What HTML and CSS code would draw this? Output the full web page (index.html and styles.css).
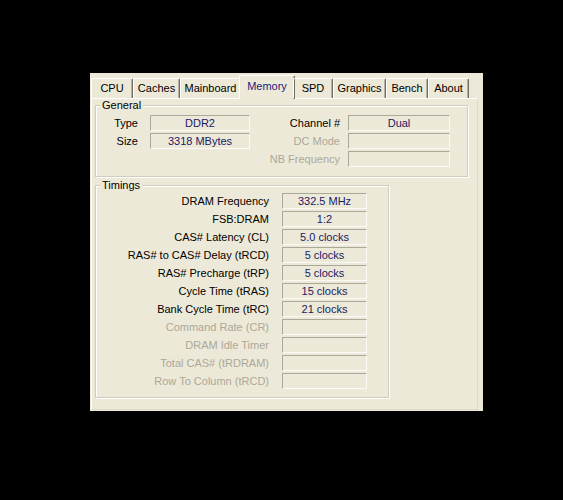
FILE: index.html
```html
<!DOCTYPE html>
<html>
<head>
<meta charset="utf-8">
<link rel="stylesheet" href="styles.css">
</head>
<body>
<div class="win">
  <div class="tabs">
    <div class="tab t-cpu">CPU</div>
    <div class="tab t-caches">Caches</div>
    <div class="tab t-mainboard">Mainboard</div>
    <div class="tab t-memory active">Memory</div>
    <div class="tab t-spd">SPD</div>
    <div class="tab t-graphics">Graphics</div>
    <div class="tab t-bench">Bench</div>
    <div class="tab t-about">About</div>
  </div>
  <div class="panel">
    <fieldset class="group general">
      <legend>General</legend>
      <div class="gen-body">
        <div class="gen-col left">
          <div class="row"><span class="lbl">Type</span><span class="fld">DDR2</span></div>
          <div class="row"><span class="lbl">Size</span><span class="fld">3318 MBytes</span></div>
        </div>
        <div class="gen-col right">
          <div class="row"><span class="lbl">Channel #</span><span class="fld">Dual</span></div>
          <div class="row"><span class="lbl off">DC Mode</span><span class="fld"></span></div>
          <div class="row"><span class="lbl off">NB Frequency</span><span class="fld"></span></div>
        </div>
      </div>
    </fieldset>
    <fieldset class="group timings">
      <legend>Timings</legend>
      <div class="row"><span class="lbl">DRAM Frequency</span><span class="fld">332.5 MHz</span></div>
      <div class="row"><span class="lbl">FSB:DRAM</span><span class="fld">1:2</span></div>
      <div class="row"><span class="lbl">CAS# Latency (CL)</span><span class="fld">5.0 clocks</span></div>
      <div class="row"><span class="lbl">RAS# to CAS# Delay (tRCD)</span><span class="fld">5 clocks</span></div>
      <div class="row"><span class="lbl">RAS# Precharge (tRP)</span><span class="fld">5 clocks</span></div>
      <div class="row"><span class="lbl">Cycle Time (tRAS)</span><span class="fld">15 clocks</span></div>
      <div class="row"><span class="lbl">Bank Cycle Time (tRC)</span><span class="fld">21 clocks</span></div>
      <div class="row"><span class="lbl off">Command Rate (CR)</span><span class="fld"></span></div>
      <div class="row"><span class="lbl off">DRAM Idle Timer</span><span class="fld"></span></div>
      <div class="row"><span class="lbl off">Total CAS# (tRDRAM)</span><span class="fld"></span></div>
      <div class="row"><span class="lbl off">Row To Column (tRCD)</span><span class="fld"></span></div>
    </fieldset>
  </div>
</div>
</body>
</html>
```
FILE: styles.css
```css
html, body {
  margin: 0;
  padding: 0;
  background: #000;
}
body {
  font-family: "Liberation Sans", Arial, sans-serif;
  font-size: 11px;
  line-height: 13px;
  color: #000;
}
.win {
  margin: 73px 0 0 90px;
  width: 393px;
  height: 338px;
  background: #ECE9D8;
  box-sizing: border-box;
  padding: 2px 5px 0 1px;
}
.tabs {
  display: flex;
  align-items: flex-end;
  height: 23px;
  position: relative;
  z-index: 1;
}
.tab {
  box-sizing: border-box;
  height: 20px;
  padding-top: 3px;
  text-align: center;
  border-left: 1px solid #fff;
  border-top: 1px solid #fff;
  border-right: 1px solid #6f6d62;
  border-radius: 2px 2px 0 0;
  box-shadow: inset -1px 0 #b5b2a3;
  color: #000;
  white-space: nowrap;
}
.tab.active {
  height: 24px;
  padding-top: 4px;
  margin-bottom: -1px;
  margin-left: -2px;
  margin-right: -2px;
  color: #1c1c78;
  background: #ECE9D8;
}
.t-cpu { width: 42px; }
.t-caches { width: 47px; }
.t-mainboard { width: 61px; }
.t-memory { width: 56px; }
.t-spd { width: 40px; }
.t-graphics { width: 53px; }
.t-bench { width: 42px; }
.t-about { width: 41px; }

.panel {
  height: 312px;
  box-sizing: border-box;
  border-top: 1px solid #fff;
  border-left: 1px solid #fff;
  border-right: 1px solid #dcd9c9;
  border-bottom: 1px solid #dcd9c9;
  padding: 0 3px 0 3px;
}
.group {
  margin: 0;
  border: 1px solid #cfcdbd;
  box-shadow: inset 1px 1px #fff, 1px 1px #fff;
  min-width: 0;
}
.group legend {
  padding: 0 2px;
  margin-left: 4px;
  background: #ECE9D8;
  line-height: 13px;
}
.general {
  width: 373px;
  box-sizing: border-box;
  padding: 3px 0 9px 0;
}
.gen-body {
  display: flex;
}
.gen-col {
  display: flex;
  flex-direction: column;
  gap: 2px;
}
.row {
  display: flex;
  align-items: center;
}
.lbl {
  text-align: right;
  box-sizing: border-box;
  white-space: nowrap;
}
.lbl.off {
  color: #aca899;
}
.fld {
  box-sizing: border-box;
  height: 16px;
  line-height: 14px;
  text-align: center;
  color: #1a1a66;
  border-top: 1px solid #aca899;
  border-left: 1px solid #aca899;
  border-right: 1px solid #fbfaf6;
  border-bottom: 1px solid #fbfaf6;
  white-space: nowrap;
}
.left .lbl { width: 54px; padding-right: 12px; }
.left .fld { width: 100px; }
.right .lbl { width: 98px; padding-right: 8px; }
.right .fld { width: 102px; }

.timings {
  margin-top: 2px;
  width: 294px;
  box-sizing: border-box;
  padding: 1px 0 8px 0;
  display: flex;
  flex-direction: column;
  gap: 2px;
}
.timings .lbl { width: 186px; padding-right: 13px; }
.timings .fld { width: 85px; }
```
